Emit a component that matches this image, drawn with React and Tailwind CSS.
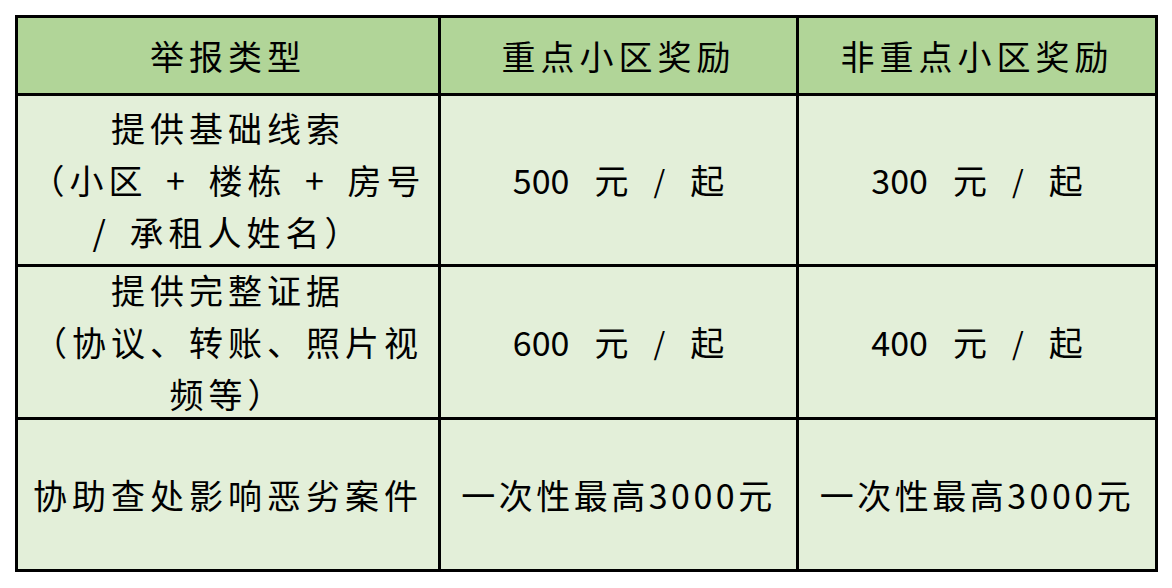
export default function App() {
  const font = { fontFamily: '"Noto Sans CJK SC", "Noto Sans", sans-serif' };
  const cell = "bg-[#e3efd9] flex items-center justify-center text-center";
  const price = (n) => (
    <div className={cell + " gap-[25px] tracking-normal"}>
      <span>{n}</span>
      <span>元</span>
      <span className="text-[30px]">/</span>
      <span>起</span>
    </div>
  );
  return (
    <div className="w-[1172px] h-[588px] bg-white pt-[15px] pl-[15px]" style={font}>
      <div className="w-[1143px] grid grid-cols-[420px_355px_356px] grid-rows-[75px_168px_150px_149px] gap-[3px] p-[3px] bg-black text-[34px] leading-[52px] tracking-[5px] text-black">
        <div className="bg-[#b1d598] flex items-center justify-center">举报类型</div>
        <div className="bg-[#b1d598] flex items-center justify-center">重点小区奖励</div>
        <div className="bg-[#b1d598] flex items-center justify-center">非重点小区奖励</div>

        <div className={cell}>
          <div className="[word-spacing:6px]">
            提供基础线索<br />（小区 + 楼栋 + 房号<br />/ 承租人姓名）
          </div>
        </div>
        {price("500")}
        {price("300")}

        <div className={cell}>
          <div>
            提供完整证据<br />（协议、转账、照片视<br />频等）
          </div>
        </div>
        {price("600")}
        {price("400")}

        <div className={cell}>协助查处影响恶劣案件</div>
        <div className={cell + " tracking-[3.5px]"}>一次性最高3000元</div>
        <div className={cell + " tracking-[3.5px]"}>一次性最高3000元</div>
      </div>
    </div>
  );
}
